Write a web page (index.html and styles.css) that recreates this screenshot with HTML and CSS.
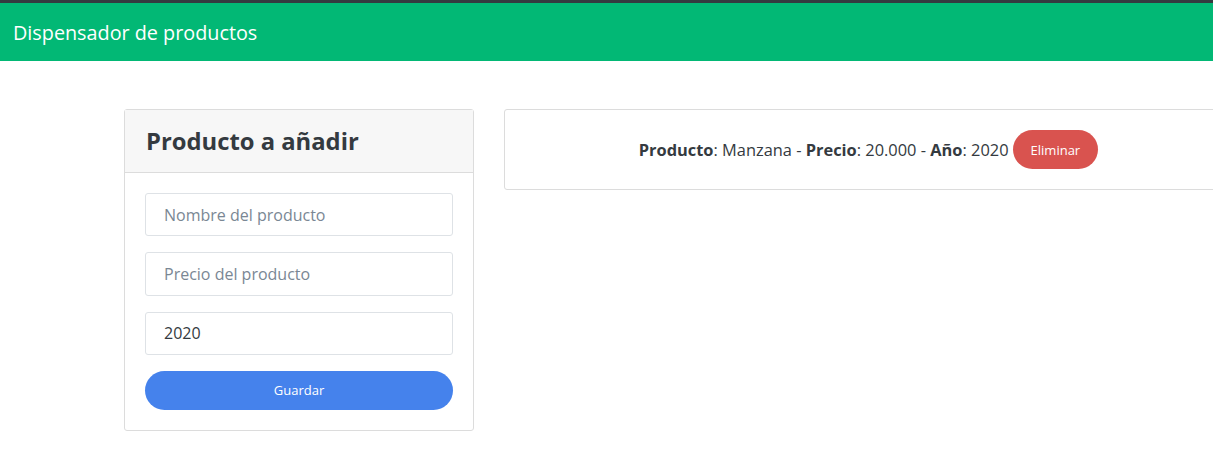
FILE: index.html
```html
<!DOCTYPE html>
<html lang="es">
<head>
<meta charset="utf-8">
<title>Dispensador de productos</title>
<link rel="stylesheet" href="styles.css">
</head>
<body>
<div class="topline"></div>
<nav class="navbar"><span class="brand">Dispensador de productos</span></nav>
<main class="content">
  <section class="card form-card">
    <header class="card-header"><h3>Producto a añadir</h3></header>
    <form class="card-body">
      <input class="field" type="text" placeholder="Nombre del producto">
      <input class="field" type="text" placeholder="Precio del producto">
      <input class="field" type="text" value="2020">
      <button type="button" class="btn btn-primary">Guardar</button>
    </form>
  </section>
  <section class="list">
    <div class="card item-card">
      <div class="item">
        <span><strong>Producto</strong>: Manzana - <strong>Precio</strong>: 20.000 - <strong>Año</strong>: 2020</span>
        <button type="button" class="btn btn-danger">Eliminar</button>
      </div>
    </div>
  </section>
</main>
</body>
</html>
```
FILE: styles.css
```css
html, body {
  margin: 0;
  padding: 0;
  overflow-x: hidden;
}
body {
  font-family: "Open Sans", "Noto Sans", sans-serif;
  color: #343a40;
  background: #fff;
  width: 1213px;
}
.topline {
  height: 3px;
  background: #343a40;
}
.navbar {
  height: 58px;
  background: #02b875;
  display: flex;
  align-items: center;
  padding-left: 13px;
}
.brand {
  color: #fff;
  font-size: 19.8px;
}
.content {
  display: flex;
  align-items: flex-start;
  gap: 30px;
  padding: 48px 0 0 124px;
}
.card {
  border: 1px solid #dcdcdc;
  border-radius: 3px;
  background: #fff;
  box-sizing: border-box;
}
.form-card {
  width: 350px;
  flex: none;
}
.card-header {
  background: #f7f7f7;
  border-bottom: 1px solid #dcdcdc;
  height: 63px;
  box-sizing: border-box;
  padding: 0 21px;
  display: flex;
  align-items: center;
}
.card-header h3 {
  margin: 0;
  font-size: 23.8px;
  font-weight: 700;
  color: #343a40;
}
.card-body {
  padding: 20px 20px 20px 20px;
  display: flex;
  flex-direction: column;
  gap: 16px;
}
.field {
  height: 43.33px;
  box-sizing: border-box;
  border: 1px solid #dee2e6;
  border-radius: 3px;
  padding: 0 18px;
  font-family: inherit;
  font-size: 16px;
  color: #343a40;
  outline: none;
}
.field::placeholder {
  color: #7a8794;
}
.btn {
  border: none;
  color: #fff;
  font-family: inherit;
  font-size: 13px;
  border-radius: 20px;
  height: 39px;
  cursor: pointer;
}
.btn-primary {
  background: #4582ec;
  width: 100%;
}
.btn-danger {
  background: #d9534f;
  padding: 0 18px;
  margin-left: 4px;
}
.list {
  flex: none;
  width: 729px;
}
.item-card {
  height: 81px;
  display: flex;
  align-items: center;
  justify-content: center;
}
.item {
  display: flex;
  align-items: center;
  font-size: 16.4px;
}
```
